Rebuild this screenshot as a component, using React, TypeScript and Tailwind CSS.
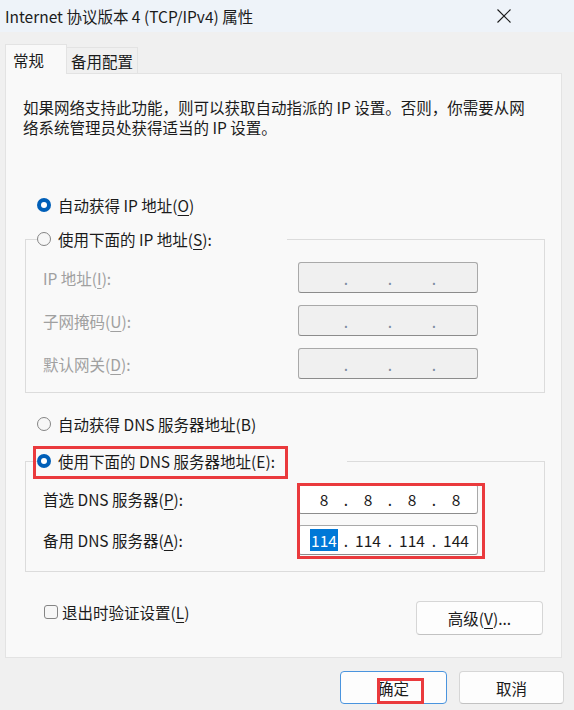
import React from "react";

function Radio({ checked }: { checked?: boolean }) {
  if (checked)
    return (
      <span className="flex h-[14px] w-[14px] shrink-0 items-center justify-center rounded-full bg-[#005fb8]">
        <span className="h-[6px] w-[6px] rounded-full bg-white" />
      </span>
    );
  return <span className="h-[14px] w-[14px] shrink-0 rounded-full border border-[#858585] bg-[#f7f7f7]" />;
}

function Key({ k }: { k: string }) {
  return <span className="underline decoration-1 underline-offset-[3px]">{k}</span>;
}

function IpBox({
  values,
  disabled,
  highlightFirst,
  h,
}: {
  values: string[];
  disabled?: boolean;
  highlightFirst?: boolean;
  h: string;
}) {
  return (
    <div
      className={
        disabled
          ? "flex w-[180px] items-center rounded-[3px] border border-[#a9a9a9] border-b-[#8c8c8c] bg-[#f0f0f0] pl-[7px] " + h
          : "flex w-[180px] items-center rounded-[3px] border border-[#a9a9a9] border-b-[#8c8c8c] bg-white pl-[7px] " + h
      }
    >
      {[0, 1, 2, 3].map((i) => (
        <React.Fragment key={i}>
          {i > 0 && (
            <span className={disabled ? "w-[8px] text-center text-[#7c8aa0]" : "w-[8px] text-center text-[#1b1b1b]"}>.</span>
          )}
          <span className="w-[36px] text-center leading-[21px] text-[#1b1b1b]">
            {highlightFirst && i === 0 ? (
              <span className="bg-[#0078d7] px-[1px] text-white">{values[i]}</span>
            ) : (
              values[i]
            )}
          </span>
        </React.Fragment>
      ))}
    </div>
  );
}

export default function App() {
  return (
    <div className="h-[710px] w-[574px] overflow-hidden bg-[#f0f0f0] font-['Noto_Sans_CJK_SC',sans-serif] text-[15.5px] leading-[20px] text-[#1b1b1b]">
      {/* Title bar */}
      <div className="flex h-[32px] items-center justify-between bg-[#eef3f9] pl-[5px] pr-[63px]">
        <span>Internet 协议版本 4 (TCP/IPv4) 属性</span>
        <svg width="14" height="14" viewBox="0 0 14 14" className="text-[#1b1b1b]">
          <path d="M0.5 0.5 L13.5 13.5 M13.5 0.5 L0.5 13.5" stroke="currentColor" strokeWidth="1.1" fill="none" />
        </svg>
      </div>

      {/* Tabs */}
      <div className="ml-[5px] mt-[12px] flex items-end">
        <div className="relative z-10 mb-[-1px] flex h-[30px] w-[62px] items-center border border-b-0 border-[#e3e3e3] bg-[#f9f9f9] pl-[7px]">
          常规
        </div>
        <div className="flex h-[26px] w-[71px] items-center justify-center border border-b-0 border-l-0 border-[#e3e3e3] bg-[#f0f0f0]">
          备用配置
        </div>
      </div>

      {/* Panel */}
      <div className="ml-[5px] flex h-[585px] w-[557px] flex-col border border-[#e3e3e3] bg-[#f9f9f9]">
        <p className="whitespace-nowrap pl-[17px] pt-[23px] leading-[20px]">
          如果网络支持此功能，则可以获取自动指派的 IP 设置。否则，你需要从网
          <br />
          络系统管理员处获得适当的 IP 设置。
        </p>

        <div className="ml-[31px] mt-[58px] flex h-[20px] items-center gap-[7px]">
          <Radio checked />
          <span>
            自动获得 IP 地址(<Key k="O" />)
          </span>
        </div>

        <fieldset className="ml-[19px] mt-[14px] w-[520px] border border-[#dcdcdc] pb-[13px]">
          <legend className="ml-[11px] w-[250px]">
            <span className="flex h-[20px] items-center gap-[7px]">
              <Radio />
              <span>
                使用下面的 IP 地址(<Key k="S" />):
              </span>
            </span>
          </legend>
          <div className="mt-[13px] flex flex-col gap-[12px] pl-[17px]">
            <div className="grid grid-cols-[255px_180px] items-center">
              <span className="text-[#a0a0a0]">
                IP 地址(<Key k="I" />):
              </span>
              <IpBox values={["", "", "", ""]} disabled h="h-[31px]" />
            </div>
            <div className="grid grid-cols-[255px_180px] items-center">
              <span className="text-[#a0a0a0]">
                子网掩码(<Key k="U" />):
              </span>
              <IpBox values={["", "", "", ""]} disabled h="h-[31px]" />
            </div>
            <div className="grid grid-cols-[255px_180px] items-center">
              <span className="text-[#a0a0a0]">
                默认网关(<Key k="D" />):
              </span>
              <IpBox values={["", "", "", ""]} disabled h="h-[31px]" />
            </div>
          </div>
        </fieldset>

        <div className="ml-[31px] mt-[21px] flex h-[20px] items-center gap-[7px]">
          <Radio />
          <span>自动获得 DNS 服务器地址(B)</span>
        </div>

        <fieldset className="ml-[19px] mt-[17px] w-[520px] border border-[#dcdcdc] pb-[16px]">
          <legend className="relative ml-[11px] w-[310px]">
            <span className="flex h-[20px] items-center gap-[7px]">
              <Radio checked />
              <span>使用下面的 DNS 服务器地址(E):</span>
            </span>
            <span className="pointer-events-none absolute left-[-4px] top-[-5px] h-[33px] w-[255px] border-[3px] border-[#ea3a3d]" />
          </legend>
          <div className="mt-[13px] flex pl-[17px]">
            <div className="flex w-[255px] flex-col gap-[11px]">
              <span className="flex h-[30px] items-center">
                <span>
                  首选 DNS 服务器(<Key k="P" />):
                </span>
              </span>
              <span className="flex h-[30px] items-center">
                <span>
                  备用 DNS 服务器(<Key k="A" />):
                </span>
              </span>
            </div>
            <div className="relative flex flex-col gap-[11px]">
              <IpBox values={["8", "8", "8", "8"]} h="h-[30px]" />
              <IpBox values={["114", "114", "114", "144"]} highlightFirst h="h-[30px]" />
              <span className="pointer-events-none absolute left-[-1px] top-[-1px] h-[76px] w-[188px] border-[3px] border-[#ea3a3d]" />
            </div>
          </div>
        </fieldset>

        <div className="mt-[29px] flex items-start justify-between pl-[38px] pr-[18px]">
          <div className="mt-[1px] flex h-[20px] items-center gap-[4px]">
            <span className="h-[14px] w-[14px] rounded-[3px] border border-[#858585] bg-[#f7f7f7]" />
            <span>
              退出时验证设置(<Key k="L" />)
            </span>
          </div>
          <button className="flex h-[34px] w-[127px] items-center justify-center rounded-[4px] border border-[#d6d6d6] border-b-[#c2c2c2] bg-[#fdfdfd]">
            <span>
              高级(<Key k="V" />)...
            </span>
          </button>
        </div>
      </div>

      {/* Bottom buttons */}
      <div className="mt-[13px] flex justify-end gap-[12px] pr-[10px]">
        <button className="relative flex h-[33px] w-[107px] items-center justify-center rounded-[4px] border border-[#4a94de] bg-[#fdfdfd]">
          确定
          <span className="pointer-events-none absolute left-[36px] top-[6px] h-[26px] w-[47px] border-[3px] border-[#ea3a3d]" />
        </button>
        <button className="flex h-[33px] w-[105px] items-center justify-center rounded-[4px] border border-[#d6d6d6] border-b-[#c2c2c2] bg-[#fdfdfd]">
          取消
        </button>
      </div>
    </div>
  );
}
